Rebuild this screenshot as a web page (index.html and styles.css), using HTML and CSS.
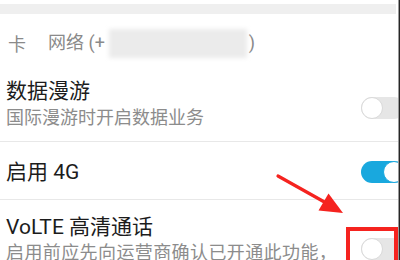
FILE: index.html
```html
<!DOCTYPE html>
<html lang="zh">
<head>
<meta charset="utf-8">
<link rel="stylesheet" href="styles.css">
</head>
<body>
<div class="screen">
  <div class="content">
    <div class="topband"></div>
    <div class="sim-row">
      <span class="sim-label">卡</span>
      <span class="sim-net">网络 (+</span>
      <span class="blurred"></span>
      <span class="sim-net">)</span>
    </div>
    <div class="row row--sep row--roam">
      <div class="text">
        <div class="title">数据漫游</div>
        <div class="sub">国际漫游时开启数据业务</div>
      </div>
      <div class="switch switch--roam"><span class="knob"></span></div>
    </div>
    <div class="row row--sep row--single">
      <div class="text">
        <div class="title">启用 4G</div>
      </div>
      <div class="switch switch--on"><span class="knob"></span></div>
    </div>
    <div class="row row--volte">
      <div class="text">
        <div class="title">VoLTE 高清通话</div>
        <div class="sub">启用前应先向运营商确认已开通此功能，</div>
      </div>
      <div class="switch switch--volte"><span class="knob"></span><span class="highlight"></span></div>
    </div>
    <svg class="arrow" width="400" height="260" viewBox="0 0 400 260">
      <line x1="278" y1="176" x2="328" y2="204" stroke="#f5231f" stroke-width="3.2" stroke-linecap="round"/>
      <polygon points="343,213 318.5,210.5 328.5,193.5" fill="#f5231f"/>
    </svg>
  </div>
  <div class="edge"></div>
</div>
</body>
</html>
```
FILE: styles.css
```css
html, body {
  margin: 0;
  padding: 0;
  background: #ffffff;
}
body {
  width: 400px;
  height: 260px;
  overflow: hidden;
  font-family: Roboto, "Noto Sans CJK SC", sans-serif;
}
.screen {
  display: flex;
  width: 400px;
  height: 260px;
}
.content {
  position: relative;
  width: 398px;
  height: 260px;
  overflow: hidden;
  background: #ffffff;
}
.edge {
  width: 2px;
  height: 260px;
  background: linear-gradient(to right, #9a9a9a 0 1px, #262626 1px 2px);
}
.topband {
  margin-top: 4px;
  margin-right: 2px;
  height: 10px;
  background: #efefef;
}
.sim-row {
  box-sizing: border-box;
  height: 46px;
  padding-top: 12px;
  padding-left: 8px;
  display: flex;
  align-items: center;
  font-size: 18px;
  color: #8a8a8a;
}
.sim-label {
  margin-right: 22px;
}
.sim-net {
  line-height: 24px;
}
.blurred {
  width: 138px;
  height: 29px;
  margin-left: 4px;
  margin-right: 2px;
  background: #ebebeb;
  filter: blur(2px);
}
.row {
  position: relative;
  box-sizing: border-box;
  display: flex;
  align-items: center;
  padding-left: 6px;
}
.row--sep {
  border-bottom: 1px solid #e8e8e8;
}
.row--roam {
  padding-top: 18px;
  padding-bottom: 11px;
}
.text {
  flex: 1;
  min-width: 0;
}
.title {
  font-size: 21px;
  line-height: 26px;
  color: #1c1c1c;
}
.sub {
  margin-top: 2px;
  font-size: 18px;
  line-height: 24px;
  color: #8c8c8c;
  white-space: nowrap;
}
.row--single {
  height: 58px;
  padding-top: 3px;
}
.row--volte {
  align-items: flex-start;
  padding-top: 14px;
}
.row--volte .sub {
  margin-top: 1px;
  letter-spacing: 0.4px;
}
.switch {
  position: relative;
  flex: none;
  width: 44px;
  height: 22px;
  margin-right: -7px;
  border-radius: 11px;
  background: #e6e6e6;
}
.switch .knob {
  position: absolute;
  left: 0;
  top: 0;
  box-sizing: border-box;
  width: 22px;
  height: 22px;
  border-radius: 50%;
  background: #ffffff;
  border: 1.5px solid #d9d9d9;
}
.switch--roam {
  margin-top: 7px;
}
.switch--on {
  background: #19a8de;
}
.switch--on .knob {
  left: 22px;
  border-color: #19a8de;
}
.switch--volte {
  margin-top: 24px;
}
.highlight {
  position: absolute;
  left: -15px;
  top: -11px;
  box-sizing: border-box;
  width: 52px;
  height: 44px;
  border: 4px solid #f5231f;
}
.arrow {
  position: absolute;
  left: 0;
  top: 0;
  pointer-events: none;
}
```
